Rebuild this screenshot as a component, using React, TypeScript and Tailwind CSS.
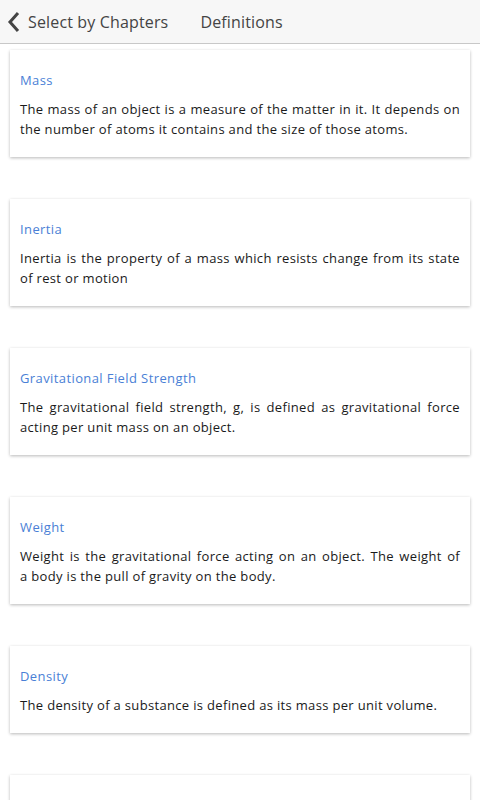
import React from "react";

const items = [
  {
    title: "Mass",
    body: "The mass of an object is a measure of the matter in it. It depends on the number of atoms it contains and the size of those atoms.",
  },
  {
    title: "Inertia",
    body: "Inertia is the property of a mass which resists change from its state of rest or motion",
  },
  {
    title: "Gravitational Field Strength",
    body: "The gravitational field strength, g, is defined as gravitational force acting per unit mass on an object.",
  },
  {
    title: "Weight",
    body: "Weight is the gravitational force acting on an object. The weight of a\u00a0body is the pull of gravity on the body.",
  },
  {
    title: "Density",
    body: "The density of a substance is defined as its mass per unit volume.",
  },
  {
    title: "Friction",
    body: "Friction is a force that opposes motion between two surfaces in contact.",
  },
];

export default function App() {
  return (
    <div
      className="w-[480px] h-[800px] overflow-hidden bg-white"
      style={{ fontFamily: '"Open Sans", "Noto Sans", sans-serif' }}
    >
      <div className="h-[44px] flex items-center bg-[#f7f7f7] border-b border-[#c8c8c8]">
        <svg width="14" height="22" viewBox="0 0 14 22" className="ml-[7px] mr-[7px] mt-[1px]">
          <path d="M11 2 L3 11 L11 20" fill="none" stroke="#444" strokeWidth="3" strokeLinecap="butt" />
        </svg>
        <span className="text-[16px] text-[#444] tracking-[0.15px] mt-[1px]">Select by Chapters</span>
        <span className="ml-[32px] text-[16px] text-[#444] tracking-[0.15px] mt-[1px]">Definitions</span>
      </div>
      <div className="flex flex-col gap-[42px] pt-[6px] px-[10px]">
        {items.map((it) => (
          <div
            key={it.title}
            className="bg-white pt-[20px] pb-[18px] px-[10px] shadow-[0_1px_3px_rgba(0,0,0,0.28)]"
          >
            <div className="text-[13px] leading-[20px] text-[#4a7fd6] tracking-[0.4px]">{it.title}</div>
            <div className="mt-[9px] text-[13px] leading-[20px] text-[#1a1a1a] text-justify tracking-[0.33px]">
              {it.body}
            </div>
          </div>
        ))}
      </div>
    </div>
  );
}
